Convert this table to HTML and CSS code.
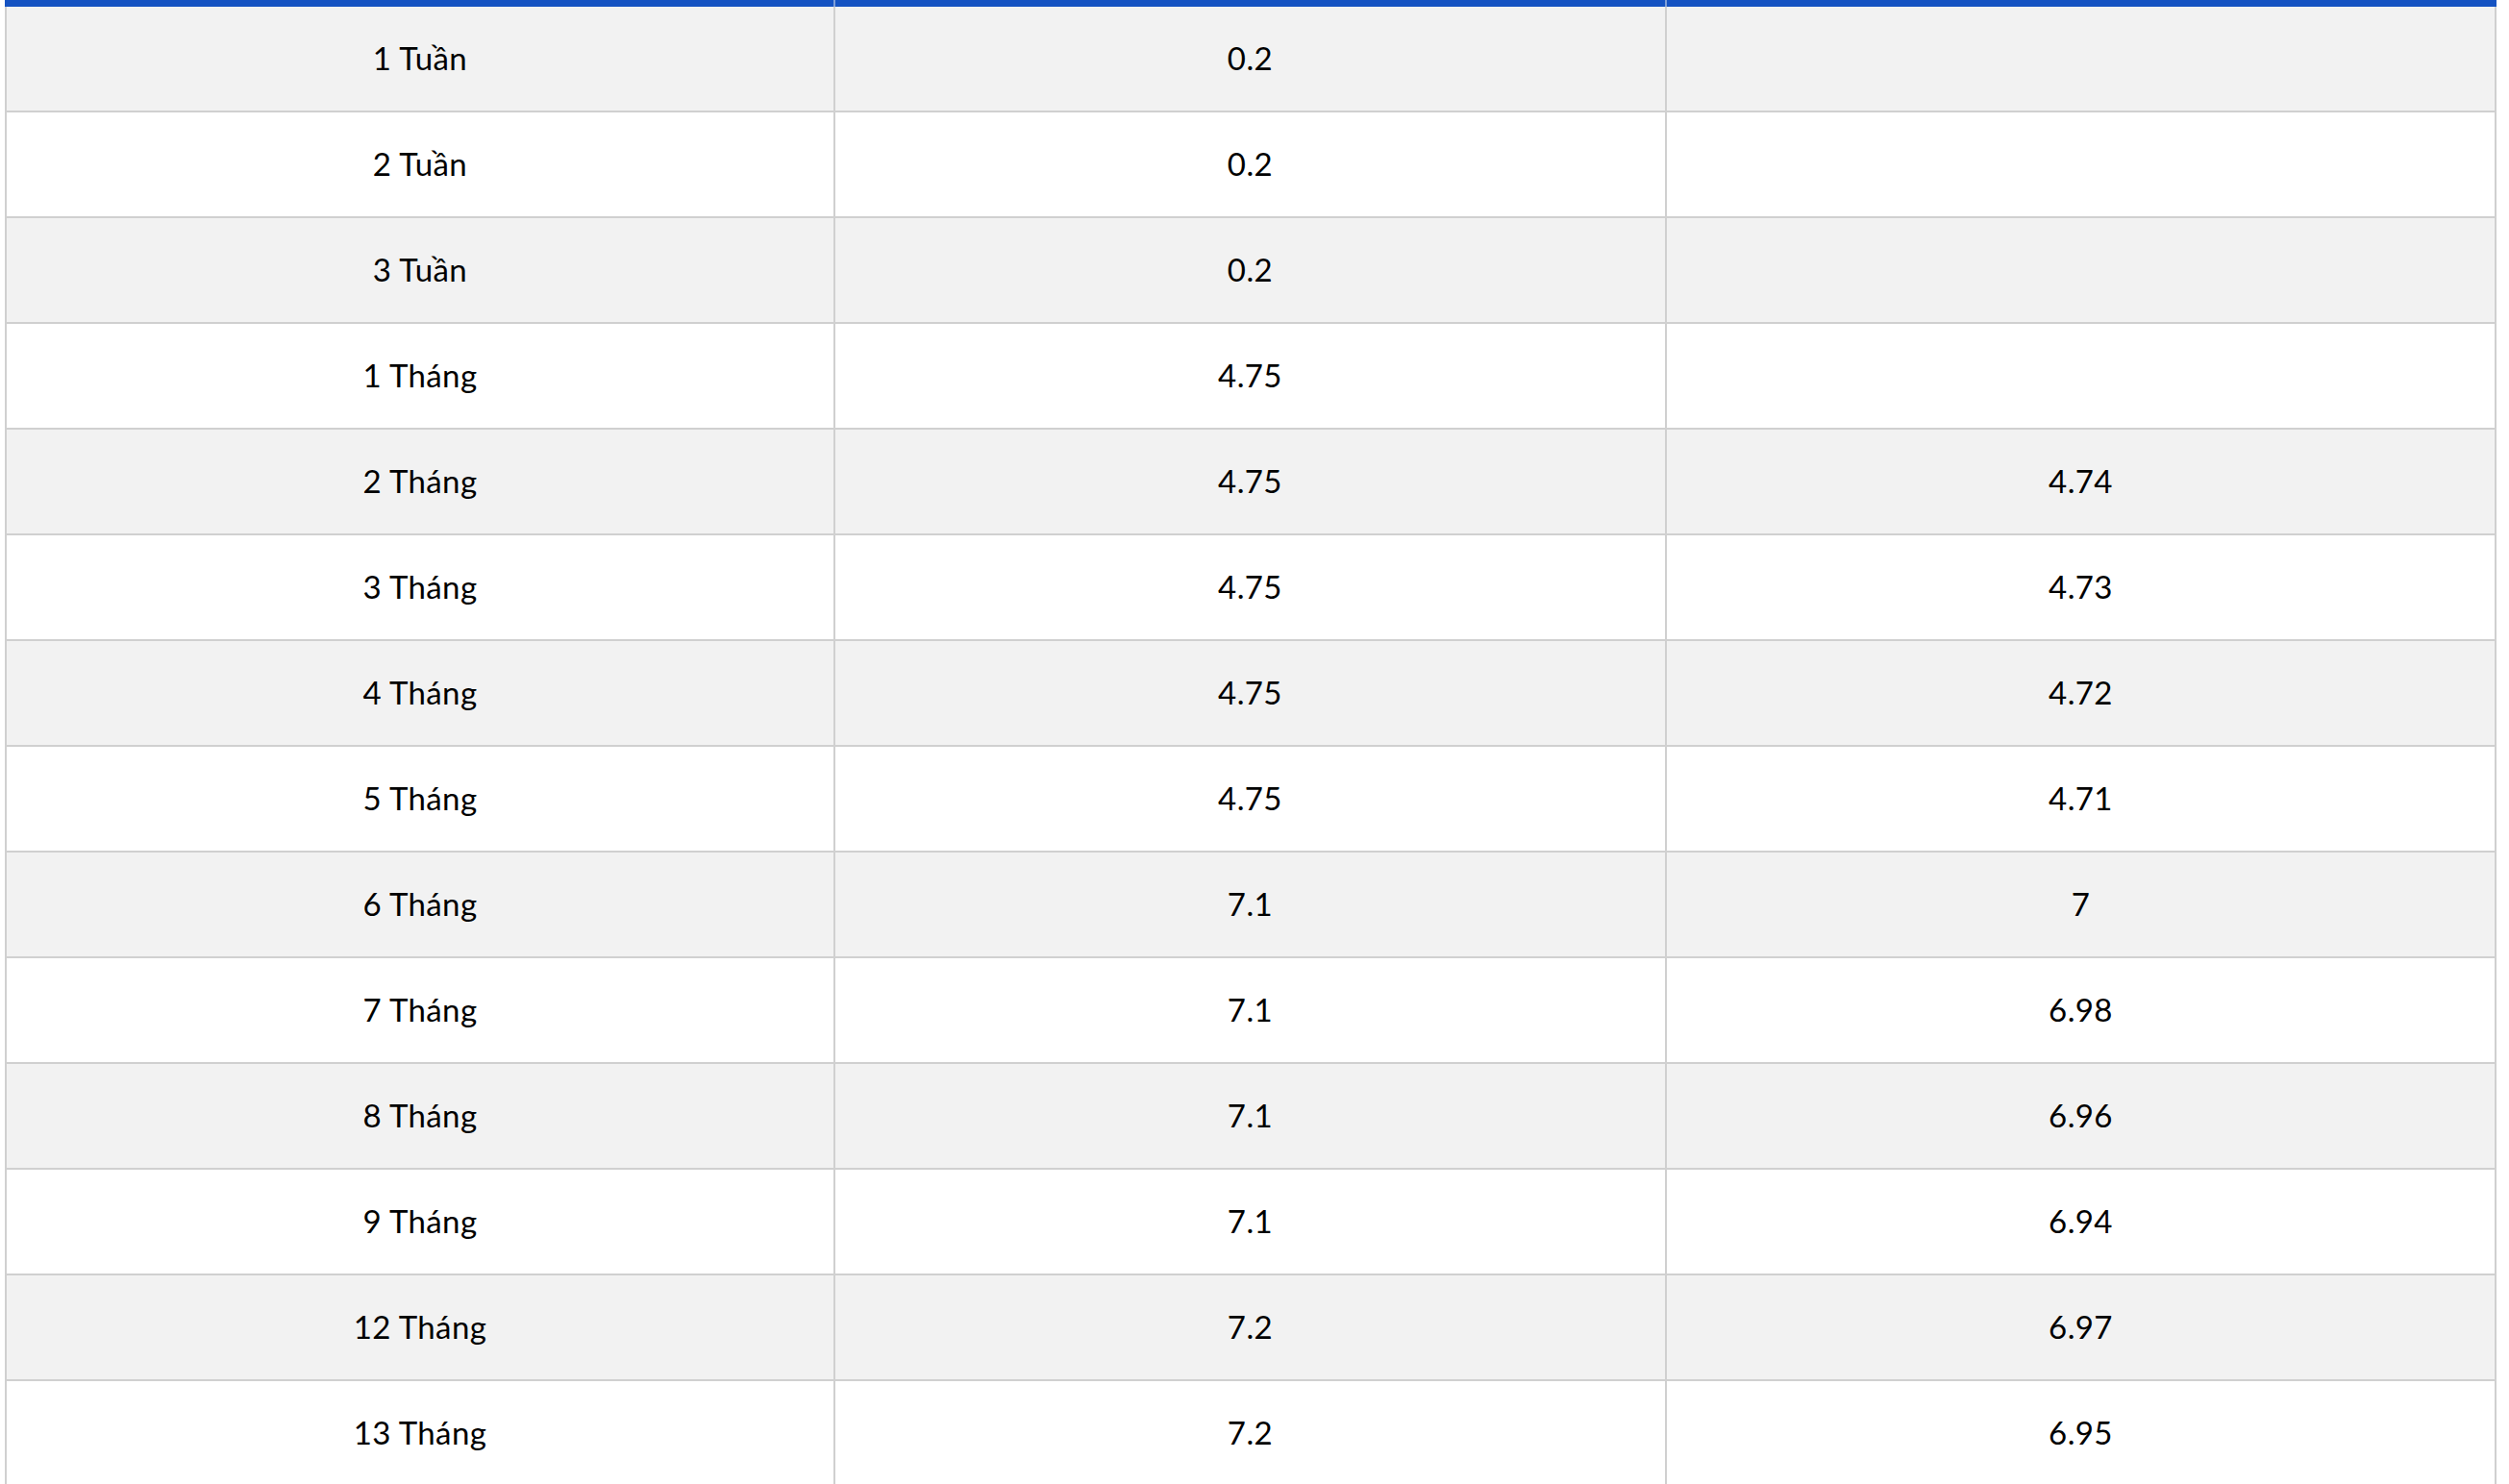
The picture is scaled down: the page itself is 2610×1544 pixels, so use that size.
FILE: index.html
```html
<!DOCTYPE html>
<html lang="vi">
<head>
<meta charset="utf-8">
<title>Lãi suất</title>
<link rel="stylesheet" href="styles.css">
</head>
<body>
<div class="wrap">
<table class="rates">
<colgroup><col class="c1"><col class="c2"><col class="c3"></colgroup>
<thead>
<tr class="head"><th></th><th></th><th></th></tr>
</thead>
<tbody>
<tr><td>1 Tuần</td><td>0.2</td><td></td></tr>
<tr><td>2 Tuần</td><td>0.2</td><td></td></tr>
<tr><td>3 Tuần</td><td>0.2</td><td></td></tr>
<tr><td>1 Tháng</td><td>4.75</td><td></td></tr>
<tr><td>2 Tháng</td><td>4.75</td><td>4.74</td></tr>
<tr><td>3 Tháng</td><td>4.75</td><td>4.73</td></tr>
<tr><td>4 Tháng</td><td>4.75</td><td>4.72</td></tr>
<tr><td>5 Tháng</td><td>4.75</td><td>4.71</td></tr>
<tr><td>6 Tháng</td><td>7.1</td><td>7</td></tr>
<tr><td>7 Tháng</td><td>7.1</td><td>6.98</td></tr>
<tr><td>8 Tháng</td><td>7.1</td><td>6.96</td></tr>
<tr><td>9 Tháng</td><td>7.1</td><td>6.94</td></tr>
<tr><td>12 Tháng</td><td>7.2</td><td>6.97</td></tr>
<tr><td>13 Tháng</td><td>7.2</td><td>6.95</td></tr>
</tbody>
</table>
</div>
</body>
</html>
```

FILE: styles.css
```css
html, body {
  margin: 0;
  padding: 0;
  background: #ffffff;
}

body {
  font-family: Lato, "Noto Sans", "Liberation Sans", sans-serif;
  color: #000000;
}

.wrap {
  padding-left: 5px;
}

.rates {
  width: 2592px;
  table-layout: fixed;
  border-collapse: separate;
  border-spacing: 0;
}

.rates .c1 { width: 862px; }
.rates .c2 { width: 865px; }
.rates .c3 { width: 865px; }

.head th {
  height: 7px;
  padding: 0;
  background: #1553c2;
  border-left: 2px solid #7f9fd8;
}

.head th:first-child {
  border-left: 2px solid #1553c2;
}

.head th:last-child {
  border-right: 2px solid #1553c2;
}

.rates td {
  height: 105px;
  padding: 0 0 3px 0;
  text-align: center;
  vertical-align: middle;
  font-size: 33px;
  letter-spacing: 0.4px;
  line-height: 40px;
  border-left: 2px solid #d0d0d0;
  border-bottom: 2px solid #d0d0d0;
}

.rates td:last-child {
  border-right: 2px solid #d0d0d0;
}

.rates tbody tr:nth-child(odd) td {
  background: #f2f2f2;
}

.rates tbody tr:nth-child(even) td {
  background: #ffffff;
}
```
